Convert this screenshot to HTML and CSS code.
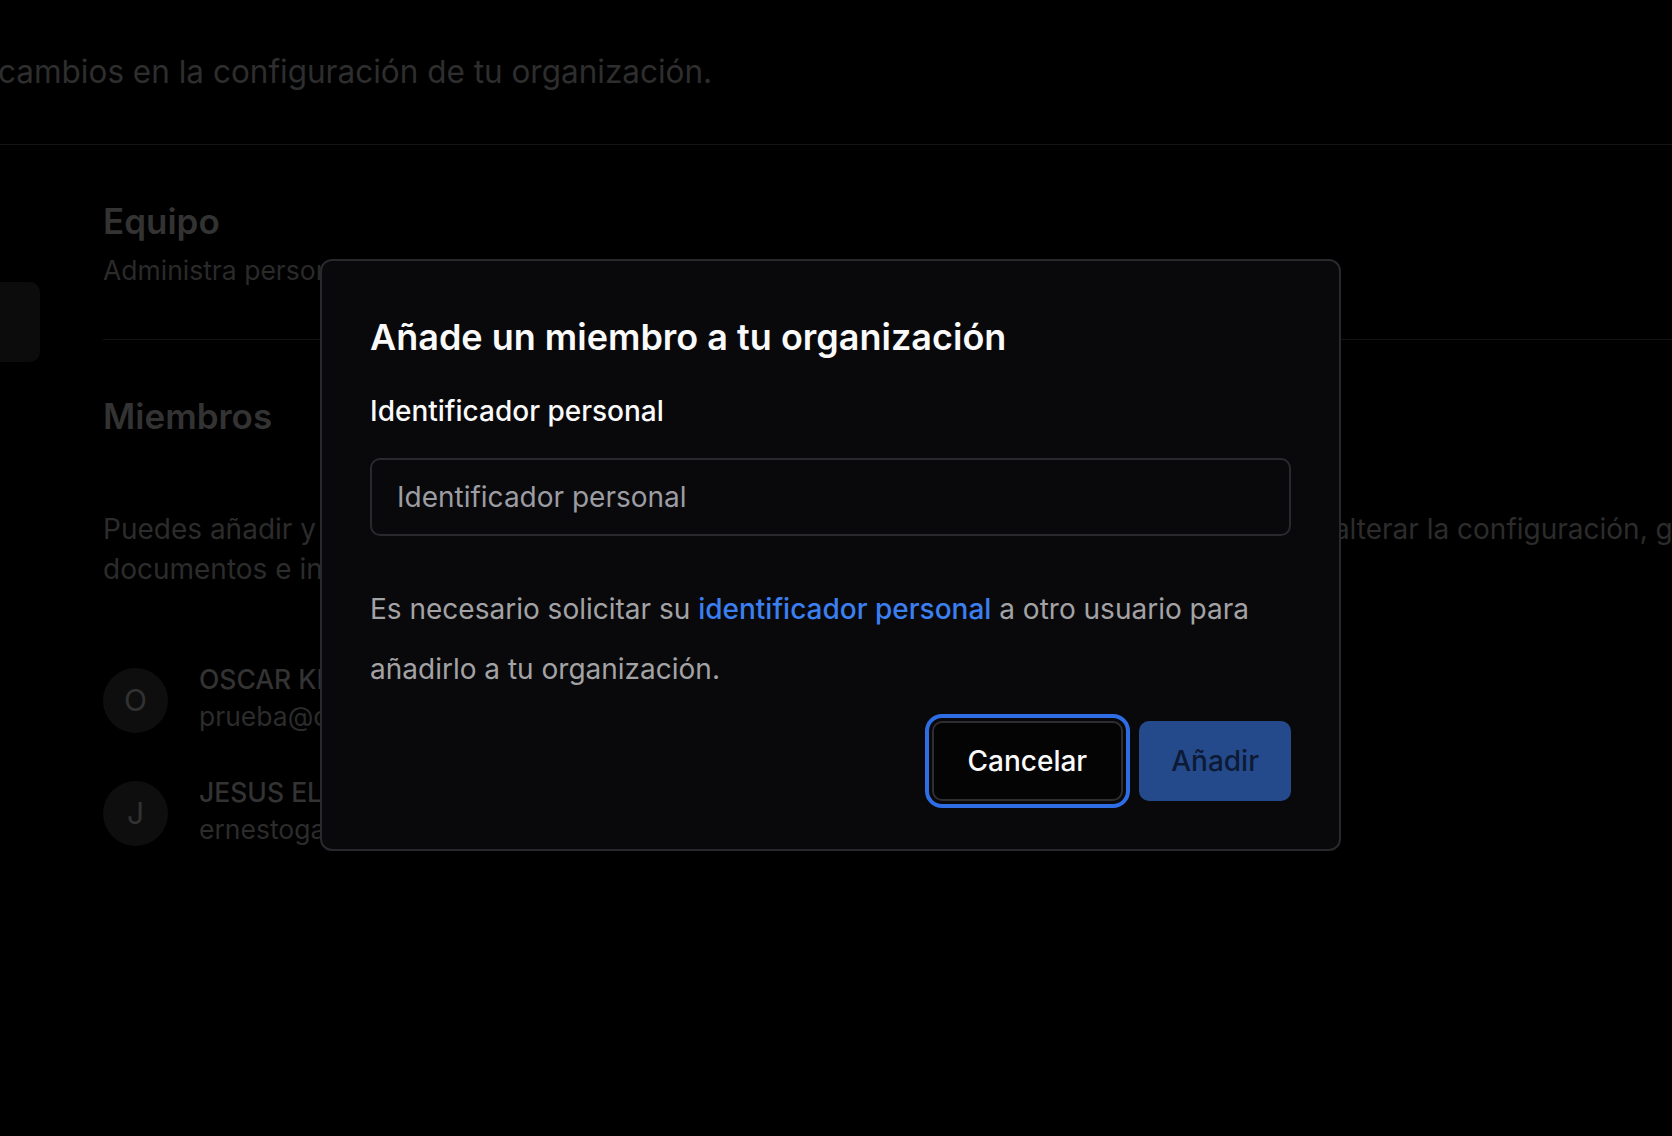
FILE: index.html
```html
<!DOCTYPE html>
<html lang="es">
<head>
<meta charset="utf-8">
<title>Equipo</title>
<link rel="stylesheet" href="styles.css">
</head>
<body>
<div class="page">
  <header class="page-head">
    <p class="page-sub">cambios en la configuración de tu organización.</p>
  </header>
  <div class="layout">
    <aside class="side">
      <div class="side-item"></div>
    </aside>
    <main class="content">
      <section class="team">
        <h2 class="sec-title">Equipo</h2>
        <p class="sec-sub">Administra personas y permisos de tu organización.</p>
      </section>
      <section class="members">
        <h2 class="sec-title members-title">Miembros</h2>
        <p class="members-desc">Puedes añadir y eliminar miembros de tu organización. Los administradores también pueden alterar la configuración, gestionar documentos e invitaciones.</p>
        <ul class="member-list">
          <li class="member">
            <span class="avatar">O</span>
            <div class="member-info">
              <span class="member-name">OSCAR KEVIN MARTÍNEZ</span>
              <span class="member-mail">prueba@correo.com</span>
            </div>
          </li>
          <li class="member">
            <span class="avatar">J</span>
            <div class="member-info">
              <span class="member-name">JESUS ELÍAS GARCÍA</span>
              <span class="member-mail">ernestogarcia@correo.com</span>
            </div>
          </li>
        </ul>
      </section>
    </main>
  </div>
</div>

<div class="overlay">
  <div class="dialog" role="dialog">
    <h1 class="dialog-title">Añade un miembro a tu organización</h1>
    <label class="field-label" for="pid">Identificador personal</label>
    <input class="field-input" id="pid" type="text" placeholder="Identificador personal">
    <p class="dialog-text">Es necesario solicitar su <a class="dialog-link" href="#">identificador personal</a> a otro usuario para añadirlo a tu organización.</p>
    <div class="dialog-actions">
      <button class="btn btn-cancel" type="button">Cancelar</button>
      <button class="btn btn-add" type="button">Añadir</button>
    </div>
  </div>
</div>
</body>
</html>
```

FILE: styles.css
```css
* { box-sizing: border-box; }

html, body {
  margin: 0;
  padding: 0;
  background: #000;
  overflow: hidden;
}

body {
  width: 1672px;
  height: 1136px;
  font-family: Inter, "Noto Sans", "Liberation Sans", sans-serif;
  color: #2f2f2f;
}

/* ---------- background page (dimmed) ---------- */
.page {
  width: 1672px;
}

.page-head {
  height: 145px;
  padding-top: 51px;
  border-bottom: 1px solid #141414;
}

.page-sub {
  margin: 0 0 0 -2px;
  font-size: 31.5px;
  line-height: 42px;
  color: #2e2e2e;
  white-space: nowrap;
}

.layout {
  display: flex;
}

.side {
  flex: none;
  width: 40px;
  padding-top: 137px;
}

.side-item {
  height: 80px;
  border-radius: 0 10px 10px 0;
  background: #0c0c0c;
}

.content {
  flex: none;
  width: 1800px;
  padding-left: 63px;
}

.team {
  padding-top: 58px;
  padding-bottom: 51px;
  border-bottom: 1px solid #141414;
}

.sec-title {
  margin: 0;
  font-size: 35px;
  line-height: 36px;
  font-weight: 600;
  color: #333;
}

.sec-sub {
  margin: 13px 0 0;
  font-size: 26.5px;
  line-height: 36px;
  color: #2a2a2a;
  white-space: nowrap;
}

.members-title {
  margin-top: 55px;
  line-height: 42px;
}

.members-desc {
  margin: 72px 0 0;
  width: 1730px;
  font-size: 28px;
  line-height: 40px;
  color: #2c2c2c;
}

.member-list {
  list-style: none;
  margin: 77px 0 0;
  padding: 0;
  display: flex;
  flex-direction: column;
  gap: 45px;
}

.member {
  display: flex;
  align-items: center;
  gap: 31px;
}

.avatar {
  flex: none;
  width: 65px;
  height: 65px;
  border-radius: 50%;
  background: #0e0e0e;
  color: #323232;
  font-size: 30px;
  display: flex;
  align-items: center;
  justify-content: center;
}

.member-info {
  display: flex;
  flex-direction: column;
  margin-top: -4px;
}

.member-name {
  font-size: 26.5px;
  line-height: 34px;
  font-weight: 500;
  color: #333;
  white-space: nowrap;
}

.member-mail {
  margin-top: 2px;
  font-size: 26.5px;
  line-height: 36px;
  color: #2c2c2c;
  white-space: nowrap;
}

/* ---------- dialog ---------- */
.overlay {
  position: fixed;
  inset: 0;
}

.dialog {
  position: absolute;
  left: 320px;
  top: 259px;
  width: 1021px;
  padding: 48px;
  border: 2px solid #29292d;
  border-radius: 12px;
  background: #09090b;
  display: flex;
  flex-direction: column;
}

.dialog-title {
  margin: 0;
  font-size: 36px;
  line-height: 56px;
  font-weight: 600;
  color: #fafafa;
}

.field-label {
  margin-top: 26px;
  font-size: 28px;
  line-height: 40px;
  font-weight: 500;
  color: #fafafa;
}

.field-input {
  margin-top: 27px;
  height: 78px;
  width: 100%;
  padding: 0 25px;
  border: 2px solid #2a2a2e;
  border-radius: 10px;
  background: #09090b;
  color: #fafafa;
  font-family: inherit;
  font-size: 28px;
  outline: none;
}

.field-input::placeholder {
  color: #9c9ca3;
}

.dialog-text {
  margin: 43px 0 0;
  font-size: 28px;
  line-height: 60px;
  color: #a3a3a6;
}

.dialog-link {
  color: #3b7ff0;
  text-decoration: none;
  font-weight: 500;
}

.dialog-actions {
  margin-top: 22px;
  display: flex;
  justify-content: flex-end;
  gap: 16px;
}

.btn {
  height: 80px;
  border-radius: 10px;
  font-family: inherit;
  font-size: 28px;
  font-weight: 500;
  cursor: pointer;
}

.btn-cancel {
  padding: 0 34px;
  border: 2px solid #2e2e31;
  background: #040405;
  color: #fafafa;
  outline: 4px solid #2e6de4;
  outline-offset: 3px;
}

.btn-add {
  padding: 0 30px;
  border: 2px solid transparent;
  background: #254a8b;
  color: #0d1a35;
}
```
